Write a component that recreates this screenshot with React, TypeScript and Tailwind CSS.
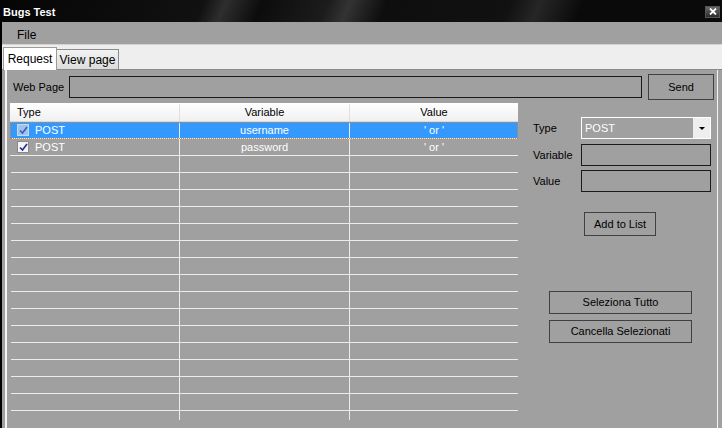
import React from 'react';

const rows = [
  { type: 'POST', variable: 'username', value: "' or '", selected: true },
  { type: 'POST', variable: 'password', value: "' or '", selected: false },
];

const Check: React.FC<{ active?: boolean }> = ({ active }) => (
  <span
    className={`flex h-[12px] w-[12px] items-center justify-center border ${
      active ? 'border-[#c8d8ef] bg-[#9ec3f0]' : 'border-[#8a8a8a] bg-[#f4f4f4]'
    }`}
  >
    <svg width="9" height="9" viewBox="0 0 9 9">
      <path d="M1 4.5 L3.5 7 L8 1" fill="none" stroke={active ? '#3b5fb0' : '#21308a'} strokeWidth="1.6" />
    </svg>
  </span>
);

const Button: React.FC<{ label: string; className: string }> = ({ label, className }) => (
  <div className={`flex items-center justify-center border border-[#404040] text-black ${className}`}>{label}</div>
);

export default function App() {
  const emptyRows = Array.from({ length: 16 });

  return (
    <div className="flex h-[428px] w-[722px] flex-col overflow-hidden bg-[#a0a0a0] font-['Liberation_Sans',sans-serif] text-[11px] text-black">
      {/* Title bar */}
      <div className="flex h-[22px] shrink-0 items-center justify-between bg-[linear-gradient(112deg,#050505_0%,#111_28%,#2e2e2e_31%,#0c0c0c_36%,#1c1c1c_45%,#333_48%,#0e0e0e_53%,#111_70%,#262626_74%,#0a0a0a_80%,#0a0a0a_100%)] pl-[3px] pr-[2px]">
        <span className="pt-[3px] text-[11px] font-bold text-white">Bugs Test</span>
        <div className="mt-[1px] flex h-[12px] w-[15px] items-center justify-center border border-[#555] bg-[linear-gradient(#6a6a6a,#2a2a2a)]">
          <svg width="8" height="7" viewBox="0 0 8 7">
            <path d="M1 0.5 L7 6.5 M7 0.5 L1 6.5" stroke="white" strokeWidth="1.8" />
          </svg>
        </div>
      </div>

      <div className="flex flex-1 flex-col border-l-2 border-black">
        {/* Menu */}
        <div className="flex h-[22px] shrink-0 items-center pl-[15px] pt-[3px] text-[12px]">File</div>
        <div className="h-[1px] bg-[#d4d4cc]" />

        {/* Tabs */}
        <div className="flex h-[25px] shrink-0 items-end border-b border-[#8a8a8a] bg-[#eeeeee] pl-[1px]">
          <div className="-mb-[1px] flex h-[23px] w-[54px] items-center justify-center border border-b-0 border-[#9a9a9a] bg-white text-[12px]">
            Request
          </div>
          <div className="flex h-[20px] w-[62px] items-center justify-center border border-b-0 border-l-0 border-[#8a8a8a] bg-[linear-gradient(#f2f2f2,#dcdcdc)] text-[12px]">
            View page
          </div>
        </div>

        {/* Panel */}
        <div className="ml-[3px] mr-[4px] flex flex-1 flex-col border-l-2 border-r border-[#f4f4f4] px-[3px]">
          <div className="mt-[4px] flex h-[26px] items-center">
            <span className="ml-[3px] w-[56px] pt-[1px]">Web Page</span>
            <div className="h-[22px] w-[576px] border border-[#1a1a1a]" />
            <Button label="Send" className="ml-[6px] h-[26px] w-[66px]" />
          </div>

          <div className="mt-[3px] flex">
            {/* Table */}
            <div className="flex h-[317px] w-[508px] flex-col overflow-hidden">
              <div className="flex h-[19px] shrink-0 border-b border-[#d8d8d8] bg-[linear-gradient(#ffffff,#f0f0f0)] pt-[1px]">
                <div className="flex w-[170px] items-center border-r border-[#e0e0e0] pl-[7px]">Type</div>
                <div className="flex w-[170px] items-center justify-center border-r border-[#e0e0e0]">Variable</div>
                <div className="flex flex-1 items-center justify-center">Value</div>
              </div>
              {rows.map((r) => (
                <div
                  key={r.variable}
                  className={`flex h-[17px] shrink-0 border-b border-[#ececec] text-white ${
                    r.selected ? 'bg-[#3399ff] outline-1 -outline-offset-1 outline-dotted outline-[#d08a3a]' : ''
                  }`}
                >
                  <div className="flex w-[170px] items-center gap-[6px] border-r border-[#ececec] pl-[7px]">
                    <Check active={r.selected} />
                    {r.type}
                  </div>
                  <div className="flex w-[170px] items-center justify-center border-r border-[#ececec]">{r.variable}</div>
                  <div className="flex flex-1 items-center justify-center">{r.value}</div>
                </div>
              ))}
              {emptyRows.map((_, i) => (
                <div key={i} className="ml-[1px] flex h-[17px] shrink-0 border-b border-[#ececec]">
                  <div className="w-[169px] border-r border-[#ececec]" />
                  <div className="w-[170px] border-r border-[#ececec]" />
                  <div className="flex-1" />
                </div>
              ))}
              <div className="ml-[1px] flex h-[8px] shrink-0">
                <div className="w-[169px] border-r border-[#ececec]" />
              </div>
            </div>

            {/* Right panel */}
            <div className="ml-[15px] flex w-[178px] flex-col">
              <div className="mt-[14px] flex h-[22px] items-center">
                <span className="w-[48px]">Type</span>
                <div className="flex h-[22px] w-[130px] border border-white">
                  <span className="flex flex-1 items-center pl-[3px] text-white">POST</span>
                  <span className="flex w-[17px] items-center justify-center bg-[#eeeeee]">
                    <svg width="6" height="3" viewBox="0 0 6 3">
                      <path d="M0 0 H6 L3 3 Z" fill="black" />
                    </svg>
                  </span>
                </div>
              </div>
              <div className="mt-[5px] flex h-[22px] items-center">
                <span className="w-[48px]">Variable</span>
                <div className="h-[22px] w-[130px] border border-[#1a1a1a]" />
              </div>
              <div className="mt-[4px] flex h-[22px] items-center">
                <span className="w-[48px]">Value</span>
                <div className="h-[22px] w-[130px] border border-[#1a1a1a]" />
              </div>
              <Button label="Add to List" className="ml-[51px] mt-[20px] h-[24px] w-[72px]" />
              <Button label="Seleziona Tutto" className="ml-[16px] mt-[55px] h-[23px] w-[143px]" />
              <Button label="Cancella Selezionati" className="ml-[16px] mt-[6px] h-[23px] w-[143px]" />
            </div>
          </div>
        </div>
      </div>
    </div>
  );
}
